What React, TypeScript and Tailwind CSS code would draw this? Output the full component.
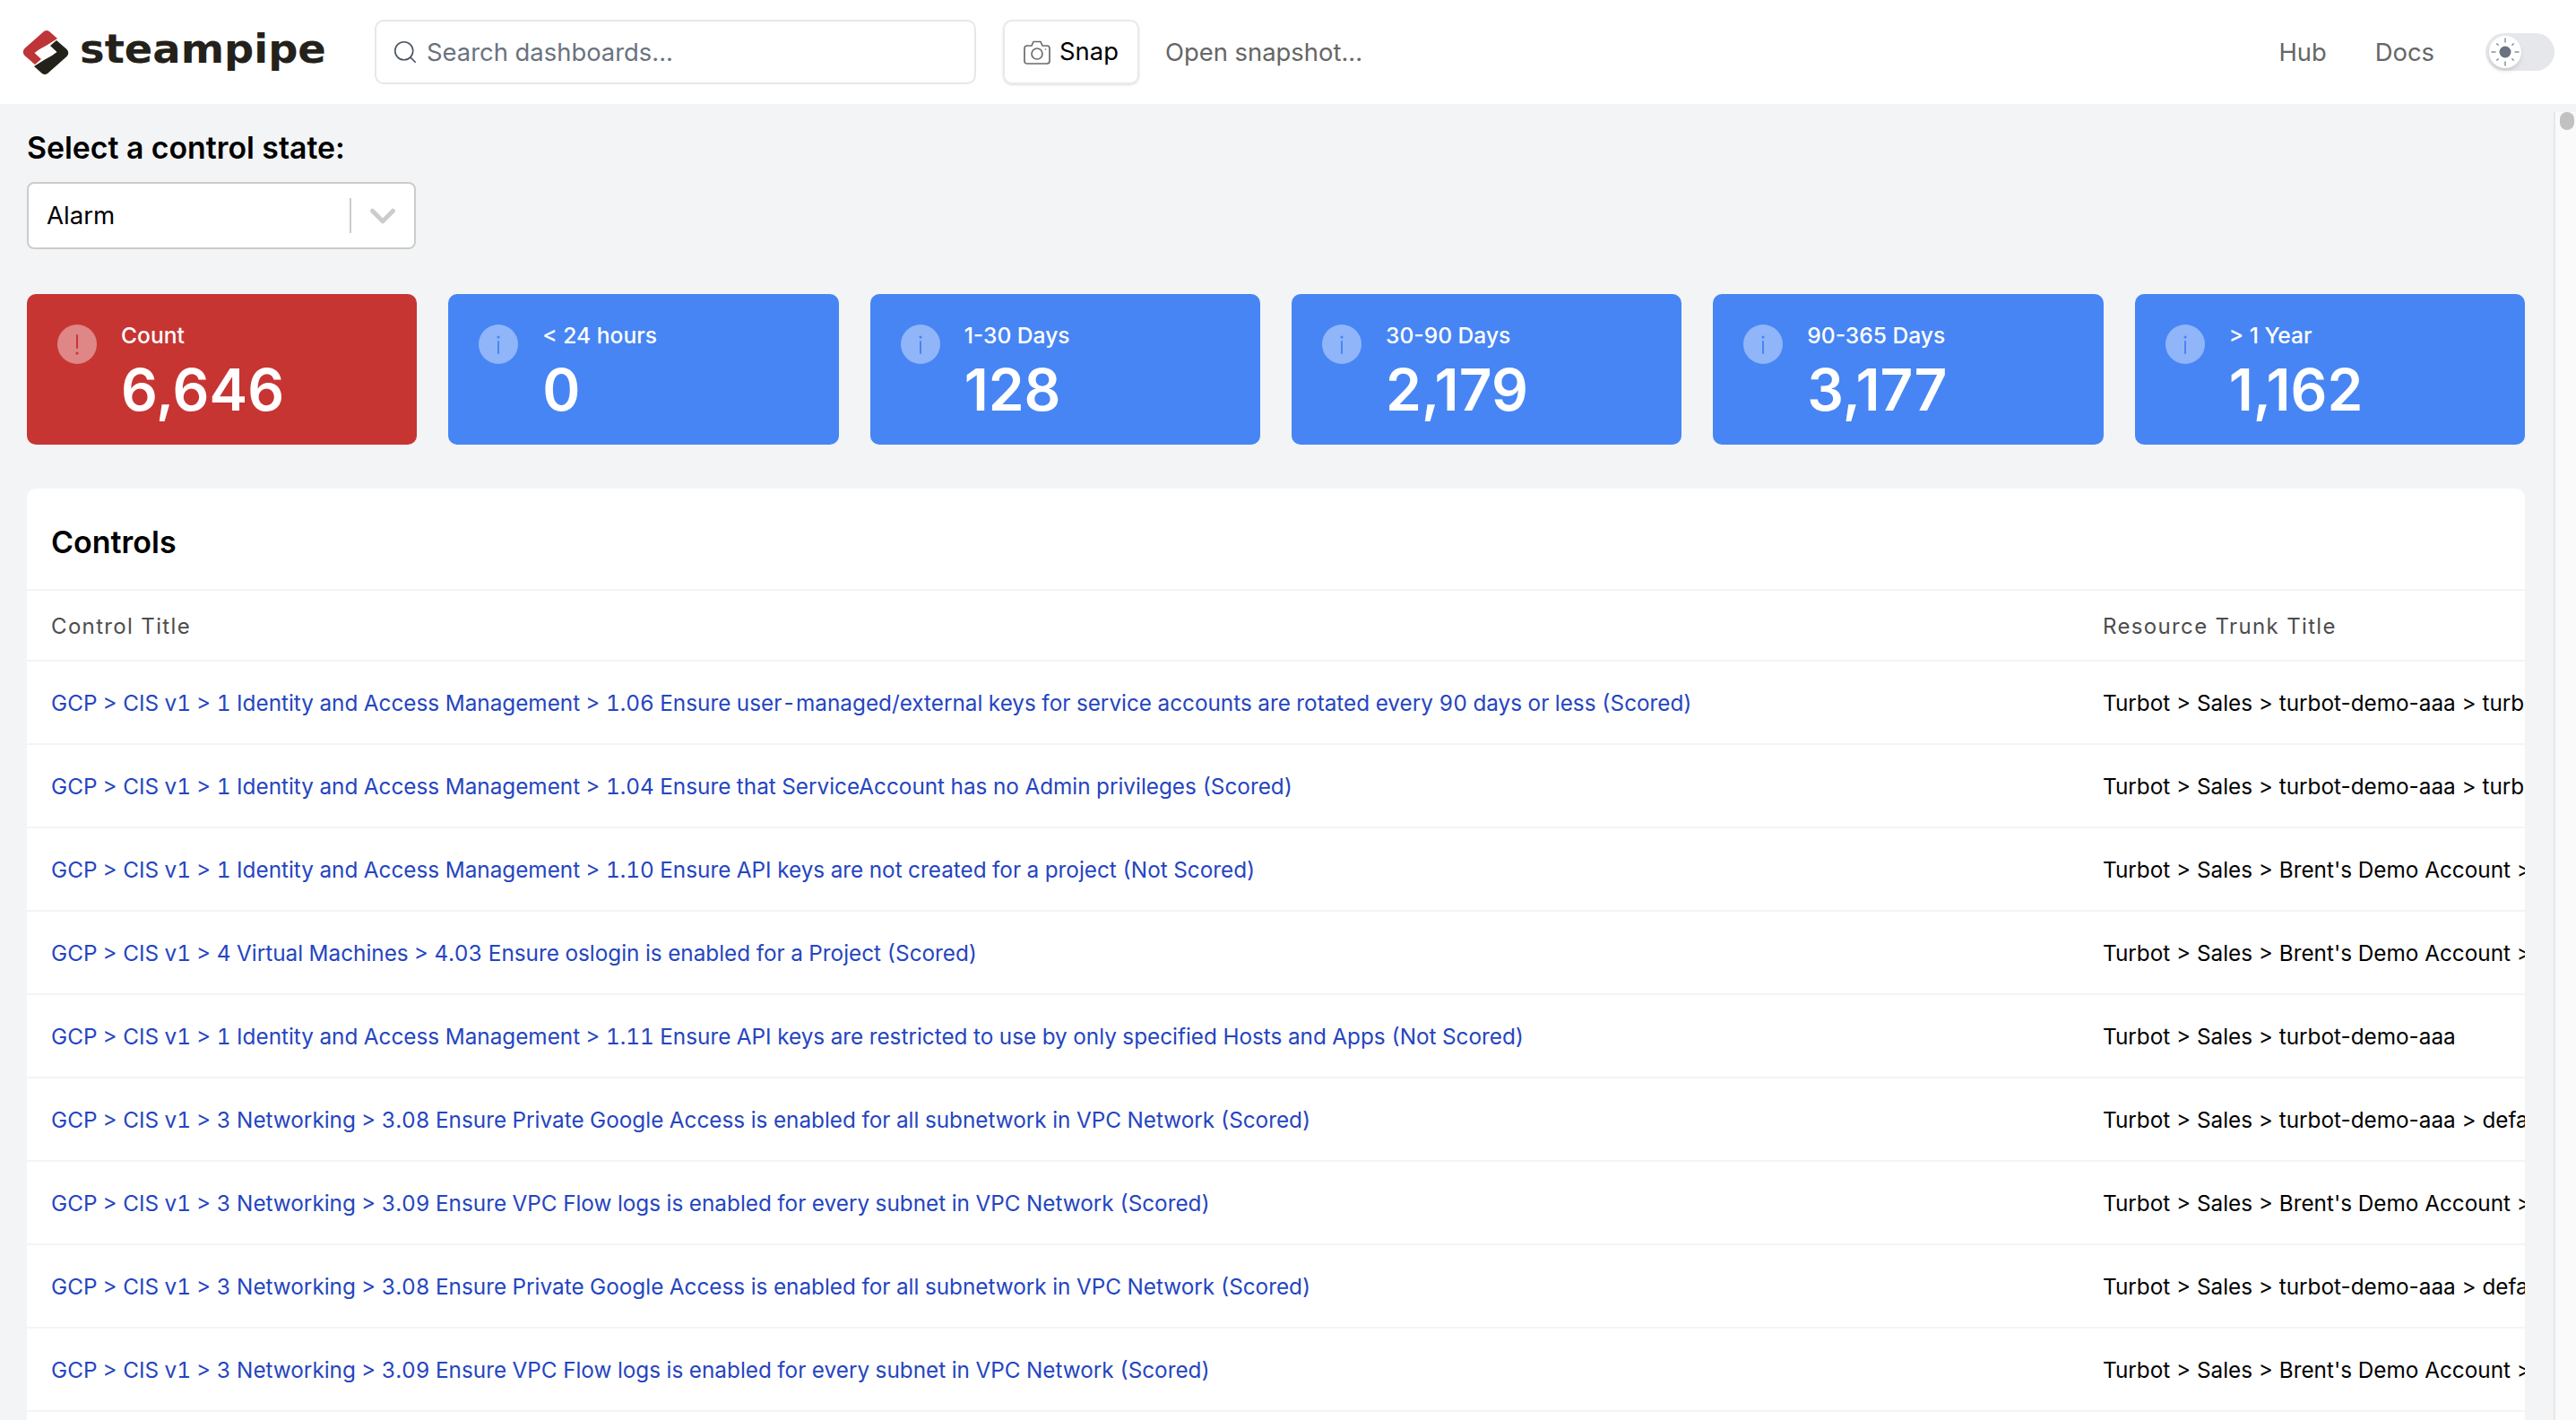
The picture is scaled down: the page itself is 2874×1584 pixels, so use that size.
import React from "react";
import { Search, ChevronDown } from "lucide-react";

const rows: [string, string][] = [
  ["GCP > CIS v1 > 1 Identity and Access Management > 1.06 Ensure user-managed/external keys for service accounts are rotated every 90 days or less (Scored)", "Turbot > Sales > turbot-demo-aaa > turbot-demo-aaa"],
  ["GCP > CIS v1 > 1 Identity and Access Management > 1.04 Ensure that ServiceAccount has no Admin privileges (Scored)", "Turbot > Sales > turbot-demo-aaa > turbot-demo-aaa"],
  ["GCP > CIS v1 > 1 Identity and Access Management > 1.10 Ensure API keys are not created for a project (Not Scored)", "Turbot > Sales > Brent's Demo Account > brent-demo"],
  ["GCP > CIS v1 > 4 Virtual Machines > 4.03 Ensure oslogin is enabled for a Project (Scored)", "Turbot > Sales > Brent's Demo Account > brent-demo"],
  ["GCP > CIS v1 > 1 Identity and Access Management > 1.11 Ensure API keys are restricted to use by only specified Hosts and Apps (Not Scored)", "Turbot > Sales > turbot-demo-aaa"],
  ["GCP > CIS v1 > 3 Networking > 3.08 Ensure Private Google Access is enabled for all subnetwork in VPC Network (Scored)", "Turbot > Sales > turbot-demo-aaa > default"],
  ["GCP > CIS v1 > 3 Networking > 3.09 Ensure VPC Flow logs is enabled for every subnet in VPC Network (Scored)", "Turbot > Sales > Brent's Demo Account > default"],
  ["GCP > CIS v1 > 3 Networking > 3.08 Ensure Private Google Access is enabled for all subnetwork in VPC Network (Scored)", "Turbot > Sales > turbot-demo-aaa > default"],
  ["GCP > CIS v1 > 3 Networking > 3.09 Ensure VPC Flow logs is enabled for every subnet in VPC Network (Scored)", "Turbot > Sales > Brent's Demo Account > default"],
];

const cards = [
  { label: "Count", value: "6,646", alert: true },
  { label: "< 24 hours", value: "0" },
  { label: "1-30 Days", value: "128" },
  { label: "30-90 Days", value: "2,179" },
  { label: "90-365 Days", value: "3,177" },
  { label: "> 1 Year", value: "1,162" },
];

function LogoMark() {
  const red = "M1.5 20 L23 1 Q26 -1 29 1 L38 9 L27 16 L18 21 L12.5 25 L20 32 L13 38 L1.5 28 Q-2 24 1.5 20 Z";
  return (
    <svg width="50" height="49" viewBox="0 0 50 49" className="shrink-0" style={{ overflow: "visible" }}>
      <path d={red} fill="#BE3537" />
      <path d={red} fill="#24211B" transform="rotate(180 25 24.5)" />
    </svg>
  );
}

function CameraIcon() {
  return (
    <svg width="30" height="27" viewBox="0 0 30 27" fill="none" stroke="#6B6B6B" strokeWidth="1.7" strokeLinejoin="round" className="shrink-0">
      <path d="M9 6 L11 1.5 H19 L21 6 H26 Q29 6 29 9 V23 Q29 26 26 26 H4 Q1 26 1 23 V9 Q1 6 4 6 Z" />
      <circle cx="15" cy="15" r="6" />
      <circle cx="24.5" cy="10" r="0.8" fill="#6B6B6B" stroke="none" />
    </svg>
  );
}

function SunIcon() {
  const spokes = [0, 45, 90, 135, 180, 225, 270, 315];
  return (
    <svg width="36" height="36" viewBox="0 0 36 36">
      <circle cx="18" cy="18" r="6.5" fill="#6B7280" />
      {spokes.map((a) => (
        <line key={a} x1="18" y1={a % 90 === 0 ? 2.5 : 4.5} x2="18" y2="7.5" stroke="#6B7280" strokeWidth="1.2" transform={`rotate(${a} 18 18)`} />
      ))}
    </svg>
  );
}

function CardIcon({ alert }: { alert?: boolean }) {
  const color = alert ? "#C73533" : "#4785F4";
  return (
    <div className={`w-[44px] h-[44px] rounded-full shrink-0 flex items-center justify-center ${alert ? "bg-[#DF8686]" : "bg-[#90B5F8]"}`}>
      <svg width="44" height="44" viewBox="0 0 44 44">
        {alert ? (
          <>
            <line x1="22" y1="12" x2="22" y2="26" stroke={color} strokeWidth="2" strokeLinecap="round" />
            <circle cx="22" cy="32" r="1.6" fill={color} />
          </>
        ) : (
          <>
            <circle cx="22" cy="14" r="1.6" fill={color} />
            <line x1="22" y1="19" x2="22" y2="32" stroke={color} strokeWidth="2" strokeLinecap="round" />
          </>
        )}
      </svg>
    </div>
  );
}

export default function App() {
  return (
    <div className="h-[1584px] w-[2874px] overflow-hidden flex flex-col bg-[#F3F4F6] text-black font-['Inter',sans-serif]">
      <header className="h-[116px] shrink-0 bg-white flex items-center pl-[26px] pr-[24px]">
        <div className="w-[392px] shrink-0 flex items-center gap-[13px]">
          <LogoMark />
          <span className="font-['DejaVu_Sans',sans-serif] font-bold text-[44px] leading-none text-[#24211B] -mt-[6px] scale-x-[1.055] origin-left">steampipe</span>
        </div>
        <div className="w-[671px] h-[72px] shrink-0 rounded-[10px] border-2 border-[#E5E7EB] flex items-center pl-[17px] gap-[9px]">
          <Search size={30} strokeWidth={1.3} className="text-[#4B5563]" />
          <span className="mt-[2px] text-[27.4px] text-[#6B7280]">Search dashboards...</span>
        </div>
        <div className="ml-[30px] w-[152px] h-[72px] shrink-0 rounded-[10px] border-2 border-[#E9E9EC] shadow-sm flex items-center justify-center gap-[10px]">
          <CameraIcon />
          <span className="text-[27.4px]">Snap</span>
        </div>
        <span className="ml-[29px] mt-[2px] text-[27.4px] text-[#666666]">Open snapshot...</span>
        <div className="ml-auto flex items-center">
          <span className="mt-[2px] text-[27.4px] text-[#666666]">Hub</span>
          <span className="ml-[54px] mt-[2px] text-[27.4px] text-[#666666]">Docs</span>
          <div className="ml-[57px] w-[77px] h-[42px] rounded-full bg-[#E5E7EB] flex items-center pl-[4px]">
            <div className="w-[36px] h-[36px] rounded-full bg-white shadow-md"><SunIcon /></div>
          </div>
        </div>
      </header>

      <div className="flex-1 min-h-0 flex">
        <main className="w-[2849px] shrink-0 pl-[30px] pr-[32px]">
          <h2 className="mt-[28px] h-[42px] text-[33.8px] leading-[42px] font-semibold">Select a control state:</h2>
          <div className="mt-[17px] w-[434px] h-[75px] rounded-[8px] border-2 border-[#CCCCCC] bg-white flex items-center pl-[20px]">
            <span className="text-[27.6px] flex-1">Alarm</span>
            <div className="w-[2px] h-[39px] bg-[#CCCCCC]" />
            <ChevronDown size={46} strokeWidth={2.6} className="text-[#CCCCCC] mx-[12px]" />
          </div>

          <div className="mt-[50px] grid grid-cols-6 gap-[35px]">
            {cards.map((c) => (
              <div key={c.label} className={`h-[168px] rounded-[10px] pl-[34px] pt-[34px] flex gap-[27px] ${c.alert ? "bg-[#C73533]" : "bg-[#4785F4]"}`}>
                <CardIcon alert={c.alert} />
                <div className="text-white">
                  <div className="text-[24.6px] leading-[24px] font-medium">{c.label}</div>
                  <div className="mt-[13px] text-[64px] leading-[72px] font-semibold">{c.value}</div>
                </div>
              </div>
            ))}
          </div>

          <section className="mt-[49px] bg-white rounded-t-[10px] overflow-hidden text-[24.3px]">
            <div className="h-[114px] flex items-center pl-[27px] pt-[7px] text-[34px] font-semibold border-b-2 border-[#F3F4F6]">Controls</div>
            <div className="h-[79px] flex items-center pt-[2px] border-b-2 border-[#F3F4F6] text-[24px] tracking-[1.35px] text-[#4D4D4D]">
              <div className="w-[2316px] shrink-0 pl-[27px]">Control Title</div>
              <div className="whitespace-nowrap">Resource Trunk Title</div>
            </div>
            {rows.map(([a, b], i) => (
              <div key={i} className="h-[93px] flex items-center pt-[2px] border-b-2 border-[#F3F4F6]">
                <div className="w-[2316px] shrink-0 pl-[27px] text-[#2545C0] whitespace-nowrap tabular-nums">{a}</div>
                <div className="whitespace-nowrap">{b}</div>
              </div>
            ))}
            <div className="h-[93px]" />
          </section>
        </main>
        <div className="mt-[9px] w-[25px] shrink-0 bg-[#FAFAFA] border-l-2 border-[#E8E8E8] pl-[5px]">
          <div className="w-[16px] h-[20px] rounded-full bg-[#C1C1C1]" />
        </div>
      </div>
    </div>
  );
}
